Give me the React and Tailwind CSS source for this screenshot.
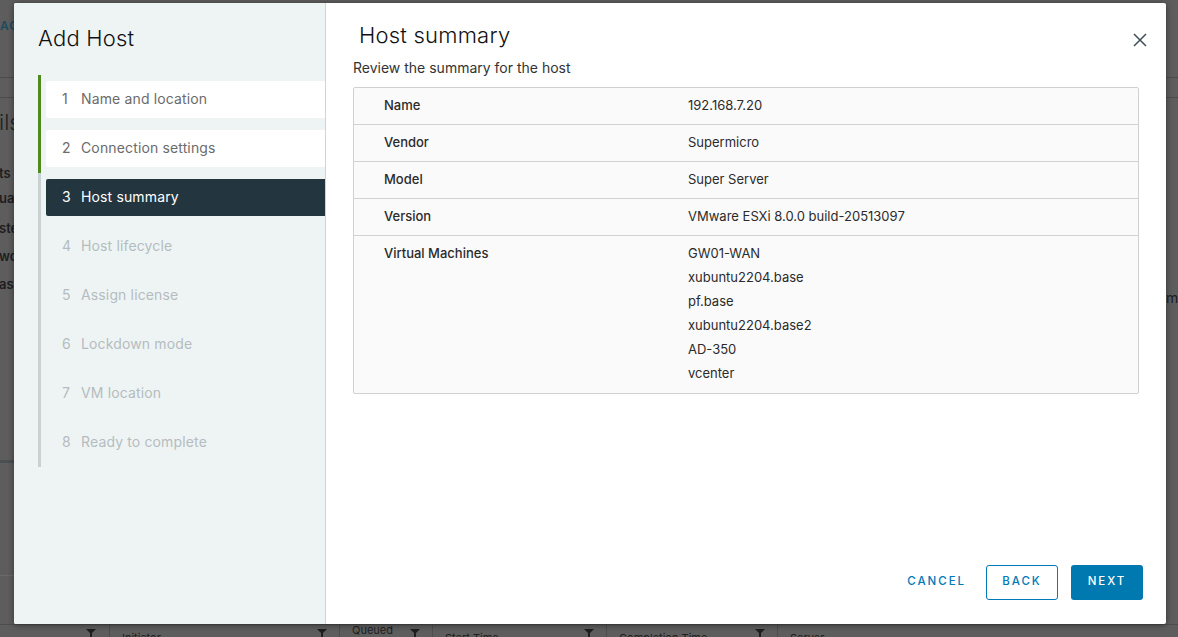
import React from "react";

const steps = [
  { n: 1, label: "Name and location", state: "done" },
  { n: 2, label: "Connection settings", state: "done" },
  { n: 3, label: "Host summary", state: "active" },
  { n: 4, label: "Host lifecycle", state: "todo" },
  { n: 5, label: "Assign license", state: "todo" },
  { n: 6, label: "Lockdown mode", state: "todo" },
  { n: 7, label: "VM location", state: "todo" },
  { n: 8, label: "Ready to complete", state: "todo" },
];

const rows = [
  { k: "Name", v: ["192.168.7.20"] },
  { k: "Vendor", v: ["Supermicro"] },
  { k: "Model", v: ["Super Server"] },
  { k: "Version", v: ["VMware ESXi 8.0.0 build-20513097"] },
  {
    k: "Virtual Machines",
    v: ["GW01-WAN", "xubuntu2204.base", "pf.base", "xubuntu2204.base2", "AD-350", "vcenter"],
  },
];

function Funnel() {
  return (
    <svg width="10" height="8" viewBox="0 0 10 8" className="shrink-0">
      <path d="M0 0 H10 L6 4 V8 H4 V4 Z" fill="#1e1e1e" />
    </svg>
  );
}

function Background() {
  return (
    <div className="flex flex-col h-full w-full text-[#222]">
      <div className="flex flex-1">
        <div className="w-[14px] overflow-hidden flex flex-col shrink-0">
          <div className="h-[78px] border-b border-[#4c4c4c] pt-[17px]">
            <div className="text-[12px] font-semibold tracking-[0.08em] text-[#1c4a60] whitespace-nowrap">ACTIONS</div>
          </div>
          <div className="h-[20px] border-b border-[#4c4c4c]" />
          <div className="pt-[11px] text-[22px] leading-[26px] font-light whitespace-nowrap -ml-[1px]">ils</div>
          <div className="mt-[30px] flex flex-col gap-[10px] text-[13px] leading-[16px] font-semibold text-[#1e1e1e] whitespace-nowrap -ml-[1px]">
            <span>ts</span>
            <span className="-mt-[1px]">ua</span>
            <span className="mt-[4px]">ste</span>
            <span className="mt-[2px]">wo</span>
            <span className="mt-[2px]">as</span>
          </div>
          <div className="mt-[168px] h-[3px] bg-[#4b4f52]" />
          <div className="mt-[112px] h-[1px] bg-[#6a6a6a]" />
        </div>
        <div className="flex-1" />
        <div className="w-[12px] overflow-hidden flex flex-col shrink-0">
          <div className="h-[78px] border-b border-[#4c4c4c]" />
          <div className="h-[20px] border-b border-[#4c4c4c]" />
          <div className="pt-[189px] text-[14px] text-[#1e1e1e] whitespace-nowrap">m</div>
        </div>
      </div>
      <div className="h-[13px] flex border-t border-[#4d4d4d] text-[11px] leading-[13px] text-[#1e1e1e] overflow-hidden">
        <div className="w-[110px] flex justify-end items-start pr-[13px] pt-[4px] border-r border-[#4d4d4d]"><Funnel /></div>
        <div className="w-[230px] flex justify-between items-start px-[12px] pt-[4px] border-r border-[#4d4d4d]"><span className="pt-[3px]">Initiator</span><Funnel /></div>
        <div className="w-[93px] flex justify-between items-start px-[12px] pt-[1px] border-r border-[#4d4d4d]"><span className="-mt-[2px]">Queued</span><span className="pt-[3px]"><Funnel /></span></div>
        <div className="w-[174px] flex justify-between items-start px-[12px] pt-[4px] border-r border-[#4d4d4d]"><span className="pt-[3px]">Start Time</span><Funnel /></div>
        <div className="w-[171px] flex justify-between items-start px-[12px] pt-[4px] border-r border-[#4d4d4d]"><span className="pt-[3px]">Completion Time</span><Funnel /></div>
        <div className="flex-1 px-[12px] pt-[7px]">Server</div>
      </div>
    </div>
  );
}

export default function App() {
  return (
    <div
      className="relative w-full h-[637px] overflow-hidden bg-[#5d5d5d]"
      style={{ fontFamily: "Inter, 'Noto Sans', sans-serif" }}
    >
      <Background />
      <div className="absolute left-[14px] top-[3px] w-[1152px] h-[621px] bg-white rounded-[2px] shadow-[0_1px_6px_rgba(0,0,0,0.45)] flex overflow-hidden">
        {/* Left steps panel */}
        <div className="w-[312px] shrink-0 bg-[#eef4f4] border-r border-[#cfd4d6] flex flex-col">
          <h2 className="pl-[24px] pt-[21px] text-[22px] leading-[28px] font-light text-[#111] tracking-[0.01em]">Add Host</h2>
          <div className="mt-[23px] pl-[24px] flex flex-col">
            {steps.map((s) => (
              <div
                key={s.n}
                className={
                  "h-[49px] border-l-[3px] pl-[5px] py-[6px] " +
                  (s.state === "done" ? "border-[#4e8a1d]" : "border-[#c9d1d4]")
                }
              >
                <div
                  className={
                    "h-[37px] flex items-center pl-[16px] pb-[2px] text-[14px] tracking-[0.01em] rounded-l-[2px] " +
                    (s.state === "done"
                      ? "bg-white text-[#6b6b6b]"
                      : s.state === "active"
                      ? "bg-[#233640] text-white"
                      : "text-[#b5bcc0]")
                  }
                >
                  <span className="w-[19px]">{s.n}</span>
                  <span>{s.label}</span>
                </div>
              </div>
            ))}
          </div>
        </div>

        {/* Right content */}
        <div className="flex-1 flex flex-col pl-[27px] pr-[24px]">
          <div className="flex items-start justify-between">
            <h3 className="pl-[6px] pt-[18px] text-[22px] leading-[28px] font-light text-[#111] tracking-[0.01em]">Host summary</h3>
            <button className="mt-[29px] -mr-[6px] w-[16px] h-[16px] flex items-center justify-center">
              <svg width="14" height="14" viewBox="0 0 14 14">
                <path d="M1 1 L13 13 M13 1 L1 13" stroke="#3d4e58" strokeWidth="1.5" />
              </svg>
            </button>
          </div>
          <p className="mt-[9px] text-[14px] leading-[20px] text-[#333]">Review the summary for the host</p>
          <div className="mt-[9px] w-[786px] border border-[#d1d1d1] rounded-[2px] bg-[#fafafa]">
            {rows.map((r, i) => (
              <div
                key={r.k}
                className={"flex " + (i > 0 ? "border-t border-[#d1d1d1]" : "")}
              >
                <div className="w-[334px] pl-[30px] text-[13px] font-medium text-[#2b2b2b] leading-[24px] pt-[5px] pb-[7px]">
                  {r.k}
                </div>
                <div className={"flex-1 flex flex-col text-[13px] text-[#2b2b2b] leading-[24px] pt-[5px] " + (r.v.length > 1 ? "pb-[8px]" : "pb-[7px]")}>
                  {r.v.map((v) => (
                    <span key={v}>{v}</span>
                  ))}
                </div>
              </div>
            ))}
          </div>
          <div className="flex-1" />
          <div className="flex justify-end items-center gap-[8px] pb-[24px] -mr-[1px]">
            <button className="h-[36px] px-[12px] text-[11.5px] font-medium tracking-[0.17em] text-[#0079b8]">CANCEL</button>
            <button className="h-[35px] w-[72px] border border-[#0079b8] rounded-[3px] text-[11.5px] font-medium tracking-[0.17em] text-[#0079b8] bg-white">BACK</button>
            <button className="ml-[5px] h-[35px] w-[72px] rounded-[3px] text-[11.5px] font-medium tracking-[0.17em] text-white bg-[#0079b0]">NEXT</button>
          </div>
        </div>
      </div>
    </div>
  );
}
